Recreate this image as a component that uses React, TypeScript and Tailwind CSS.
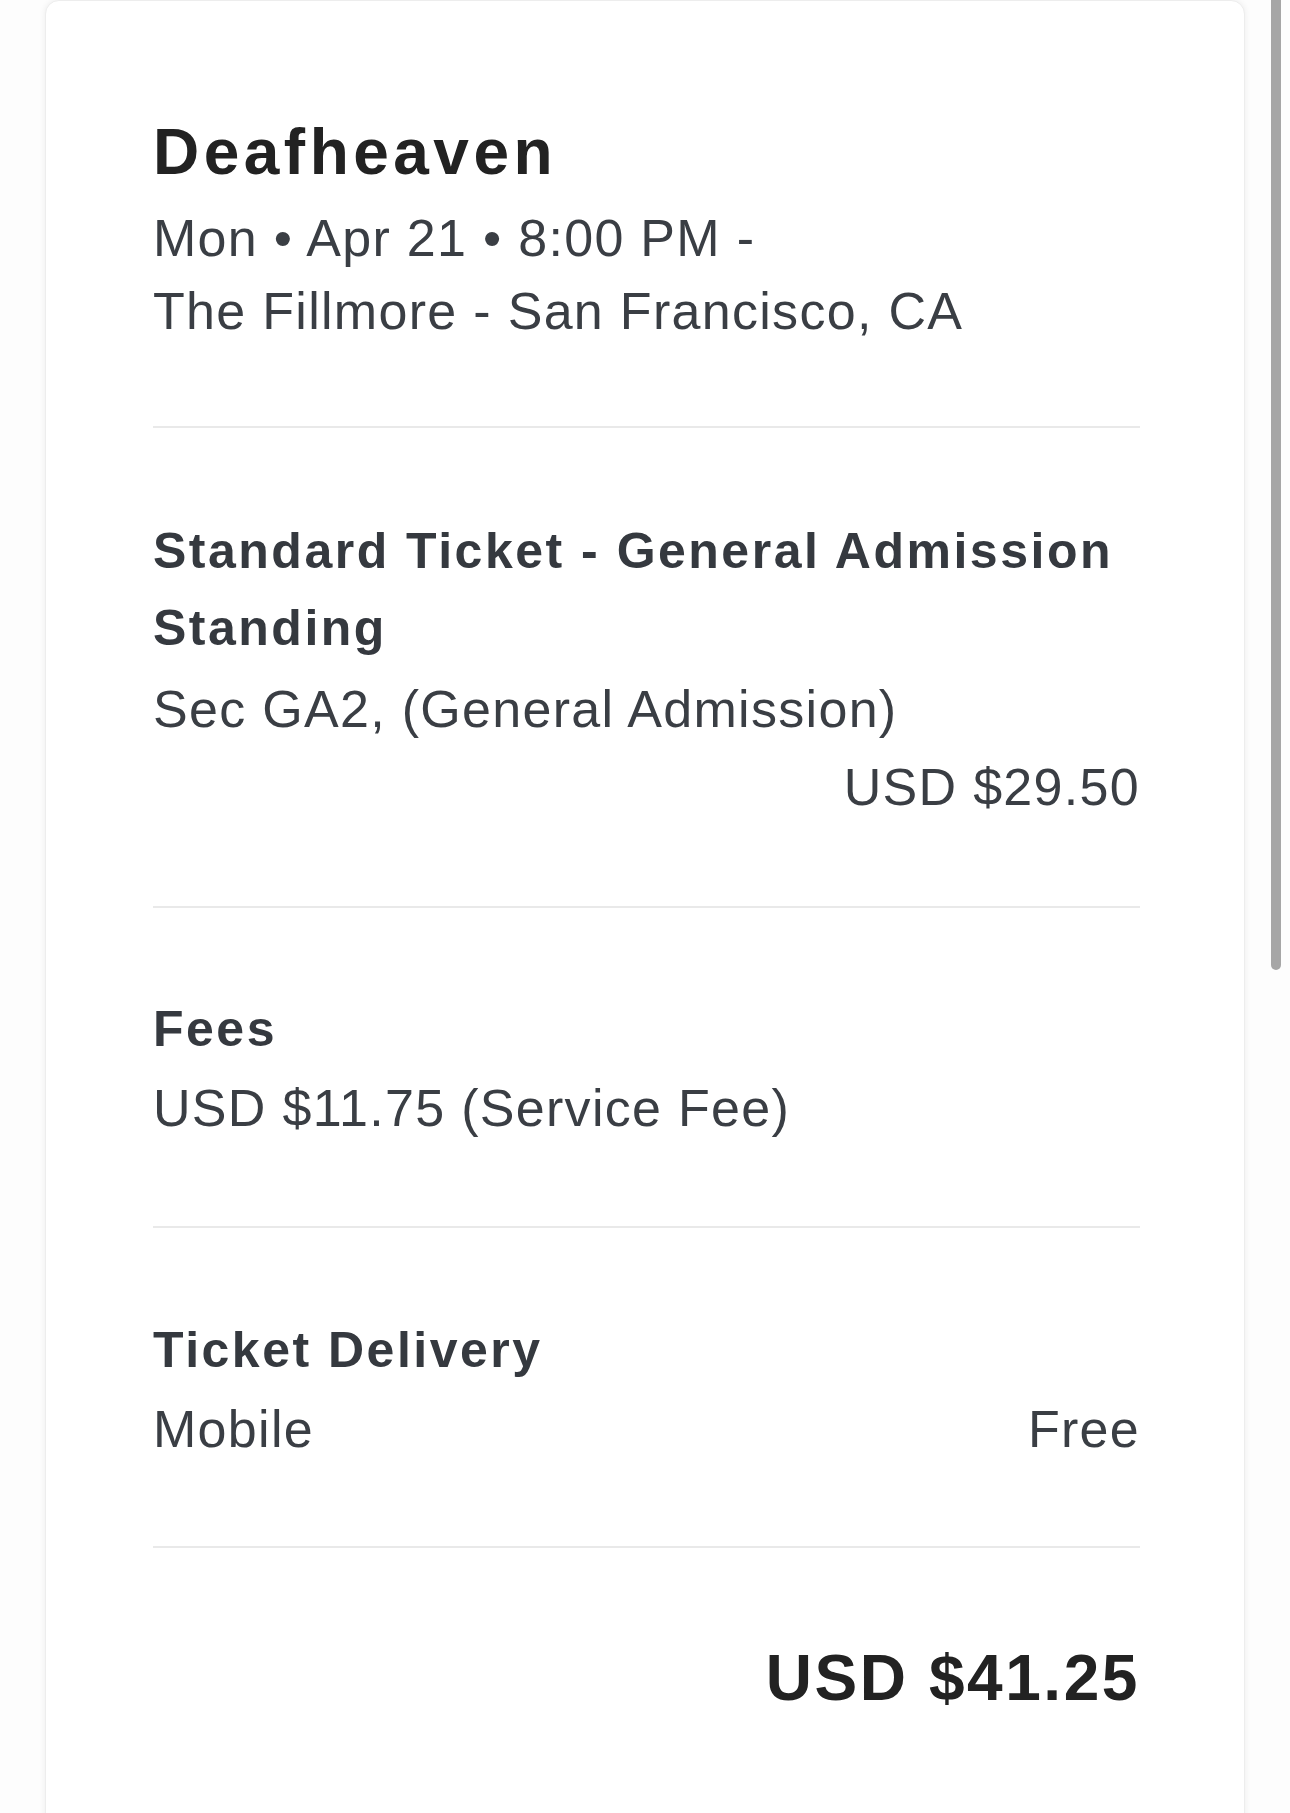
import React from 'react'

// Order summary card for a single concert ticket
const Divider = () => <div className="h-[2px] bg-[#e9e9e9]" />

const Heading = ({ children }: { children: React.ReactNode }) => (
  <div className="text-[50px] leading-[77px] font-bold tracking-[0.05em] text-[#35393f]">{children}</div>
)

const Line = ({ children, className = '' }: { children: React.ReactNode; className?: string }) => (
  <div className={`text-[52px] leading-[73px] tracking-[0.025em] text-[#3a3e44] ${className}`}>{children}</div>
)

export default function App() {
  return (
    <div className="relative h-[1813px] overflow-hidden bg-[#fdfdfd] font-['Liberation_Sans',Arial,sans-serif]">
      <div className="ml-[45px] w-[1200px] min-h-[1900px] rounded-t-[14px] border border-[#ededed] bg-white pl-[107px] pr-[104px] pt-[111px] shadow-[0_0_6px_rgba(0,0,0,0.07)]">
        {/* event */}
        <div className="pb-[78px]">
          <div className="text-[64px] leading-[80px] font-bold tracking-[0.07em] text-[#222222]">Deafheaven</div>
          <div className="mt-[10px]">
            <Line>Mon • Apr 21 • 8:00 PM -</Line>
            <Line>The Fillmore - San Francisco, CA</Line>
          </div>
        </div>
        <Divider />

        {/* ticket */}
        <div className="pt-[85px] pb-[82px]">
          <Heading>
            Standard Ticket - General Admission
            <br />
            Standing
          </Heading>
          <Line className="mt-[6px]">Sec GA2, (General Admission)</Line>
          <Line className="mt-[5px] text-right">USD $29.50</Line>
        </div>
        <Divider />

        {/* fees */}
        <div className="pt-[83px] pb-[81px]">
          <Heading>Fees</Heading>
          <Line className="mt-[4px]">USD $11.75 (Service Fee)</Line>
        </div>
        <Divider />

        {/* delivery */}
        <div className="pt-[84px] pb-[80px]">
          <Heading>Ticket Delivery</Heading>
          <div className="mt-[4px] flex justify-between">
            <Line>Mobile</Line>
            <Line>Free</Line>
          </div>
        </div>
        <Divider />

        {/* total */}
        <div className="pt-[90px]">
          <div className="text-right text-[64px] leading-[80px] font-bold tracking-[0.04em] text-[#222222]">USD $41.25</div>
        </div>
      </div>

      {/* scrollbar thumb */}
      <div className="absolute right-[9px] top-0 h-[970px] w-[10px] rounded-b-full bg-[#a6a6a6]" />
    </div>
  )
}
